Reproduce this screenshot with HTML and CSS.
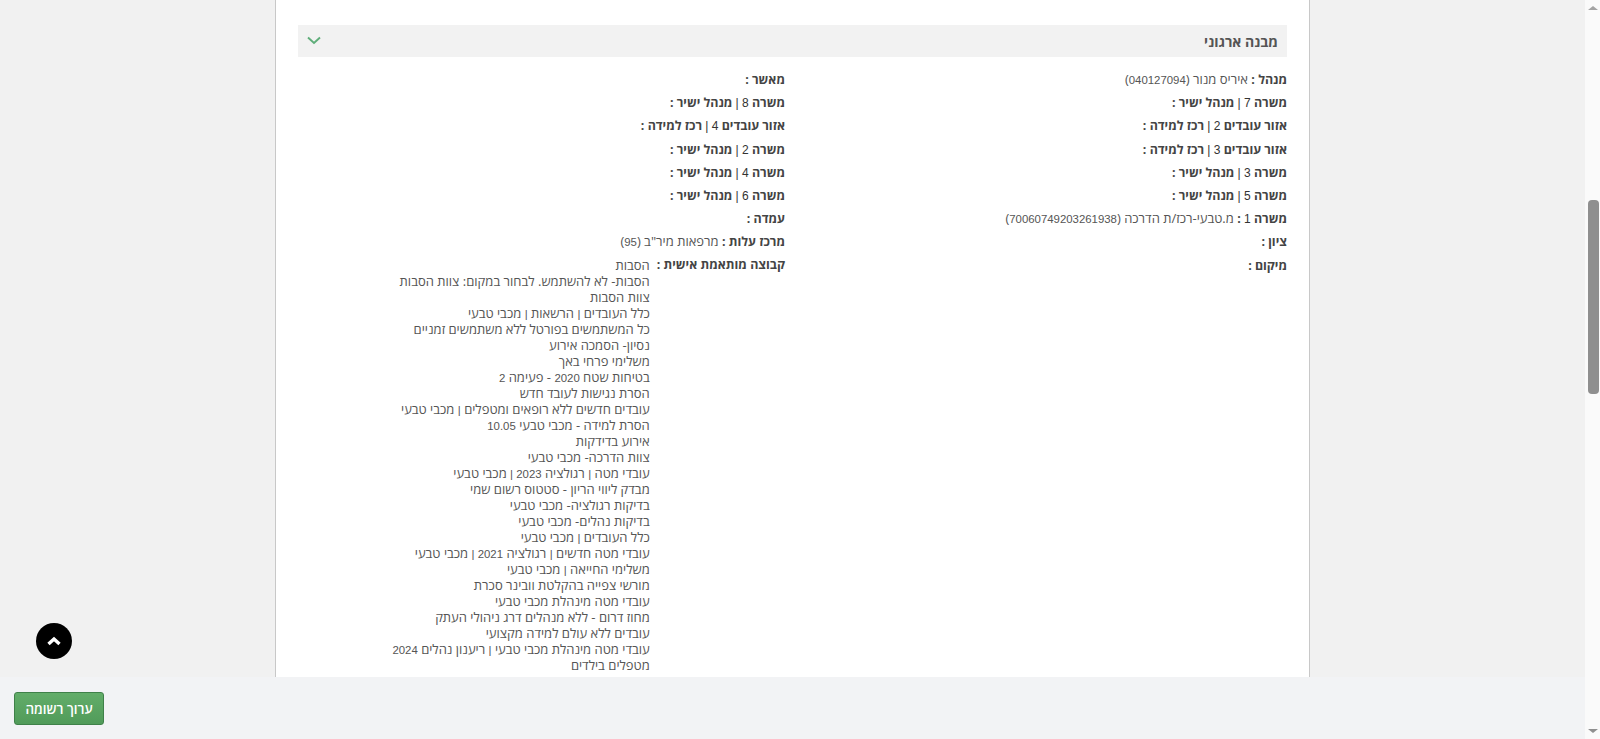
FILE: index.html
```html
<!DOCTYPE html>
<html lang="he" dir="rtl">
<head>
    <meta charset="UTF-8">
    <title>מבנה ארגוני</title>
    <link rel="stylesheet" href="styles.css">
</head>
<body>
    <div class="window">
        <div class="page">
            <div class="content">
                <div class="sheet">
                    <div class="panel-header">
                        <span class="panel-title">מבנה ארגוני</span>
                        <svg class="panel-chevron" width="14" height="9" viewBox="0 0 14 9"><path d="M1 1.500l6 5.500 6-5.500" fill="none" stroke="#5fae7a" stroke-width="1.900"/></svg>
                    </div>
                    <div class="fields">
                        <div class="field"><b>מנהל :</b> איריס מנור (<span class="num">040127094</span>)</div>
                        <div class="field"><b>מאשר :</b></div>
                        <div class="field"><b>משרה <span class="num">7 |</span> מנהל ישיר :</b></div>
                        <div class="field"><b>משרה <span class="num">8 |</span> מנהל ישיר :</b></div>
                        <div class="field"><b>אזור עובדים <span class="num">2 |</span> רכז למידה :</b></div>
                        <div class="field"><b>אזור עובדים <span class="num">4 |</span> רכז למידה :</b></div>
                        <div class="field"><b>אזור עובדים <span class="num">3 |</span> רכז למידה :</b></div>
                        <div class="field"><b>משרה <span class="num">2 |</span> מנהל ישיר :</b></div>
                        <div class="field"><b>משרה <span class="num">3 |</span> מנהל ישיר :</b></div>
                        <div class="field"><b>משרה <span class="num">4 |</span> מנהל ישיר :</b></div>
                        <div class="field"><b>משרה <span class="num">5 |</span> מנהל ישיר :</b></div>
                        <div class="field"><b>משרה <span class="num">6 |</span> מנהל ישיר :</b></div>
                        <div class="field"><b>משרה <span class="num">1</span> :</b> מ.טבעי-רכז/ת הדרכה (<span class="num">70060749203261938</span>)</div>
                        <div class="field"><b>עמדה :</b></div>
                        <div class="field"><b>ציון :</b></div>
                        <div class="field"><b>מרכז עלות :</b> מרפאות מיר"ב (<span class="num">95</span>)</div>
                        <div class="field"><b>מיקום :</b></div>
                        <div class="field field-list">
                            <b>קבוצה מותאמת אישית :</b>
                            <ul class="group-list">
                                <li>הסבות</li>
                                <li>הסבות- לא להשתמש. לבחור במקום: צוות הסבות</li>
                                <li>צוות הסבות</li>
                                <li>כלל העובדים <span class="num">|</span> הרשאות <span class="num">|</span> מכבי טבעי</li>
                                <li>כל המשתמשים בפורטל ללא משתמשים זמניים</li>
                                <li>נסיון- הסמכה אירוע</li>
                                <li>משלימי פרחי באך</li>
                                <li>בטיחות שטח <span class="num">2020</span> - פעימה <span class="num">2</span></li>
                                <li>הסרת נגישות לעובד חדש</li>
                                <li>עובדים חדשים ללא רופאים ומטפלים <span class="num">|</span> מכבי טבעי</li>
                                <li>הסרת למידה - מכבי טבעי <span class="num">10.05</span></li>
                                <li>אירוע בדידקות</li>
                                <li>צוות הדרכה- מכבי טבעי</li>
                                <li>עובדי מטה <span class="num">|</span> רגולציה <span class="num">2023 |</span> מכבי טבעי</li>
                                <li>מבדק ליווי הריון - סטטוס רשום שמי</li>
                                <li>בדיקות רגולציה- מכבי טבעי</li>
                                <li>בדיקות נהלים- מכבי טבעי</li>
                                <li>כלל העובדים <span class="num">|</span> מכבי טבעי</li>
                                <li>עובדי מטה חדשים <span class="num">|</span> רגולציה <span class="num">2021 |</span> מכבי טבעי</li>
                                <li>משלימי החייאה <span class="num">|</span> מכבי טבעי</li>
                                <li>מורשי צפייה בהקלטת וובינר סכרת</li>
                                <li>עובדי מטה מינהלת מכבי טבעי</li>
                                <li>מחוז דרום - ללא מנהלים דרג ניהולי העתק</li>
                                <li>עובדים ללא עולם למידה מקצועי</li>
                                <li>עובדי מטה מינהלת מכבי טבעי <span class="num">|</span> ריענון נהלים <span class="num">2024</span></li>
                                <li>מטפלים בילדים</li>
                            </ul>
                        </div>
                    </div>
                </div>
            </div>
            <a class="to-top" href="#">
                <svg width="16" height="10" viewBox="0 0 16 10"><path d="M2.500 8L8 3l5.500 5" fill="none" stroke="#fff" stroke-width="3.400"/></svg>
            </a>
            <div class="footer">
                <button class="btn-edit">ערוך רשומה</button>
            </div>
        </div>
        <div class="scrollbar">
            <span class="scroll-arrow scroll-up"></span>
            <div class="scroll-track"><div class="scroll-thumb"></div></div>
            <span class="scroll-arrow scroll-down"></span>
        </div>
    </div>
</body>
</html>
```

FILE: styles.css
```css
* {
    margin: 0;
    padding: 0;
    box-sizing: border-box;
}

html, body {
    height: 100%;
    overflow: hidden;
}

body {
    font-family: "Open Sans", "Noto Sans", sans-serif;
    font-size: 13px;
    color: #555;
    background: #f1f1f1;
}

.window {
    display: flex;
    direction: ltr;
    height: 100vh;
}

.page {
    position: relative;
    flex: 1;
    min-width: 0;
    display: flex;
    flex-direction: column;
}

.content {
    flex: 1;
    min-height: 0;
    overflow: hidden;
    padding: 0 275px;
}

.sheet {
    direction: rtl;
    background: #fff;
    border: 1px solid #c8c8c8;
    border-width: 0 1px;
    padding: 25px 22px 0;
    min-height: 100%;
}

.panel-header {
    display: flex;
    align-items: center;
    justify-content: space-between;
    height: 32px;
    padding: 0 9px;
    background: #f2f2f2;
}

.panel-title {
    font-size: 14px;
    font-weight: 700;
    color: #555;
}

.panel-chevron {
    margin-bottom: 2px;
}

.fields {
    display: grid;
    grid-template-columns: 1fr 1fr;
    column-gap: 15px;
    padding-top: 14px;
}

.field {
    height: 23.2px;
    line-height: 16px;
}

.field b {
    color: #444;
    font-size: 12.45px;
    font-weight: 700;
}

/* digits and pipes run narrower than the hebrew text */
.num {
    font-family: "Liberation Sans", sans-serif;
    font-size: 11.4px;
    line-height: 1;
}

b .num {
    font-size: 12px;
    font-weight: 400;
    color: #333;
}

.field-list {
    display: flex;
    gap: 7px;
    height: auto;
}

.group-list {
    list-style: none;
}

.group-list li {
    height: 16px;
}

.to-top {
    position: absolute;
    left: 36px;
    top: 623px;
    width: 36px;
    height: 36px;
    border-radius: 50%;
    background: #000;
    display: flex;
    align-items: center;
    justify-content: center;
}

.footer {
    direction: ltr;
    height: 62px;
    flex-shrink: 0;
    padding: 15px 14px 0;
    background: #f2f3f5;
}

.btn-edit {
    display: block;
    width: 90px;
    height: 33px;
    font-family: inherit;
    font-size: 13.4px;
    font-weight: 600;
    color: #fff;
    background: linear-gradient(#62ad69, #519b5a);
    border: 1px solid #3f8149;
    border-radius: 3px;
}

.scrollbar {
    width: 15px;
    flex-shrink: 0;
    display: flex;
    flex-direction: column;
    align-items: center;
    background: #fafafa;
}

.scroll-arrow {
    width: 0;
    height: 0;
    margin: 6px 0;
    border-left: 5px solid transparent;
    border-right: 5px solid transparent;
}

.scroll-up {
    border-bottom: 4px solid #a3a3a3;
}

.scroll-down {
    border-top: 4px solid #8f8f8f;
}

.scroll-track {
    flex: 1;
    width: 100%;
    padding: 184px 1.5px 0 2.5px;
}

.scroll-thumb {
    height: 194px;
    border-radius: 4px;
    background: #8f8f8f;
}
```
